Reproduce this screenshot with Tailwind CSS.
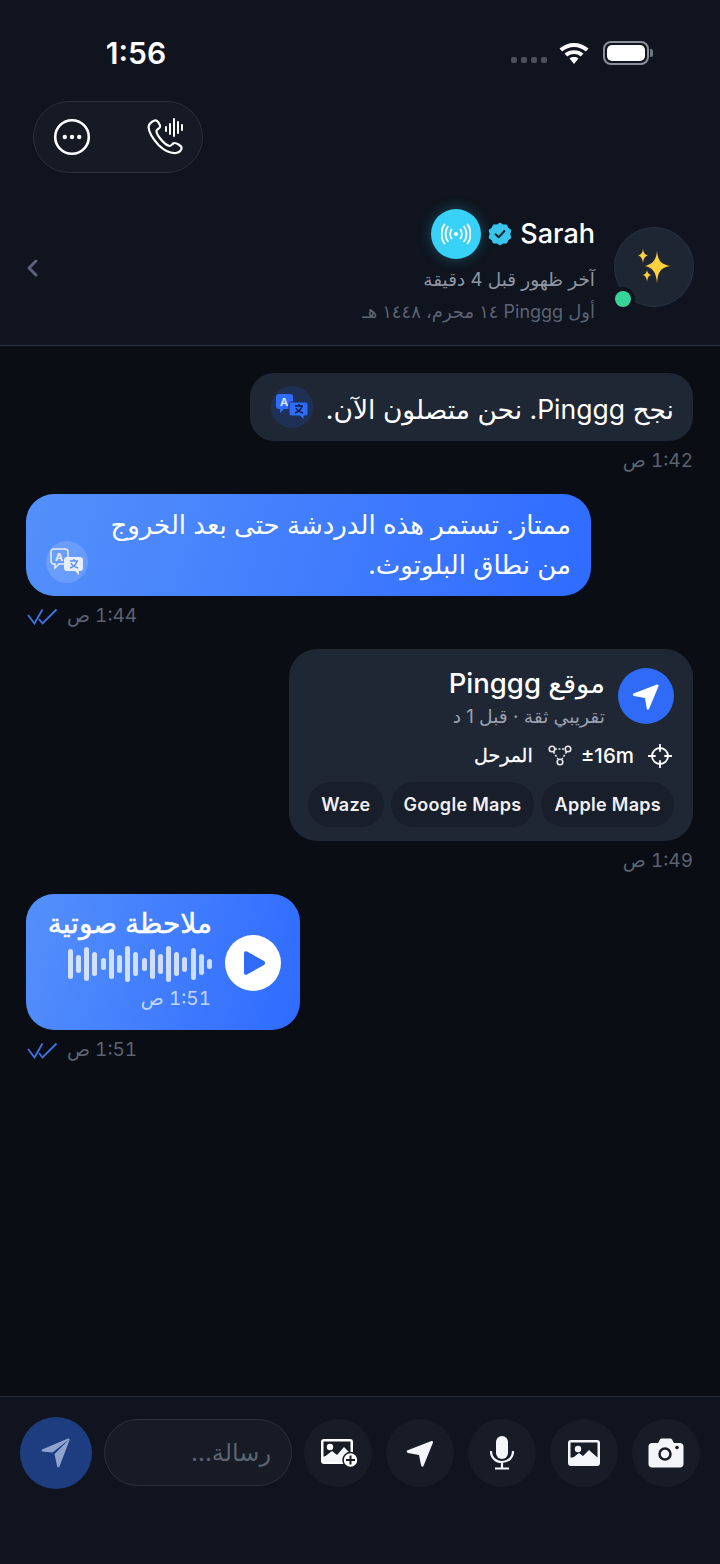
<!DOCTYPE html>
<html lang="ar">
<head>
<meta charset="utf-8">
<script src="https://cdn.jsdelivr.net/npm/@tailwindcss/browser@4"></script>
</head>
<body class="m-0 bg-[#0a0d14]">
<div class="w-[720px] h-[1564px] flex flex-col overflow-hidden bg-[#0a0d14] text-white font-['Inter','DejaVu_Sans',sans-serif]">

  <!-- header -->
  <header class="h-[346px] shrink-0 bg-[#0f141e] border-b border-[#2a3340] flex flex-col">
    <div class="h-[101px] shrink-0 flex items-start pt-[33px]">
      <div class="w-[272px] text-center text-[30px] leading-[40px] font-semibold">1:56</div>
      <div class="flex-1"></div>
      <div class="flex items-center gap-[6px] h-[40px] pr-[67px]">
        <div class="flex gap-[4px] mt-[14px] mr-[3px]">
          <span class="w-[6px] h-[6px] rounded-[2px] bg-[#4c505a]"></span><span class="w-[6px] h-[6px] rounded-[2px] bg-[#4c505a]"></span><span class="w-[6px] h-[6px] rounded-[2px] bg-[#4c505a]"></span><span class="w-[6px] h-[6px] rounded-[2px] bg-[#4c505a]"></span>
        </div>
        <svg class="w-[32px] h-[24px] ml-[2px] mr-[7px]" viewBox="0 0 32 24" fill="none">
          <path d="M1.500 7.500C9.500 0 22.500 0 30.500 7.500L27.800 10.500C21 4.500 11 4.500 4.200 10.500Z" fill="#fff"/>
          <path d="M6.500 12.500C11.500 8 20.500 8 25.500 12.500L22.800 15.500C18.800 12.200 13.200 12.200 9.200 15.500Z" fill="#fff"/>
          <path d="M11.500 17.500C14 15.600 18 15.600 20.500 17.500L16 23Z" fill="#fff"/>
        </svg>
        <div class="flex items-center">
          <div class="w-[46px] h-[24px] rounded-[8px] border-[2px] border-[#8b8f97] p-[2px]"><div class="w-full h-full rounded-[5px] bg-white"></div></div>
          <div class="w-[3px] h-[8px] ml-[1px] rounded-r-[2px] bg-[#6f737b]"></div>
        </div>
      </div>
    </div>
    <div class="pl-[33px] shrink-0">
      <div class="w-[170px] h-[72px] rounded-full bg-[#161a24] border border-[#2a303c] flex items-center justify-between pl-[19px] pr-[15px]">
        <svg class="w-[38px] h-[38px]" viewBox="0 0 38 38" fill="none"><circle cx="19" cy="19" r="16.800" stroke="#fff" stroke-width="2.600"/><circle cx="11.800" cy="19" r="2.200" fill="#fff"/><circle cx="19" cy="19" r="2.200" fill="#fff"/><circle cx="26.200" cy="19" r="2.200" fill="#fff"/></svg>
        <svg class="w-[42px] h-[38px]" viewBox="0 0 40 38" fill="none" stroke="#fff">
          <path d="M8.500 2.500C5 4 2.400 6.500 2.600 9.500C3 15 8 22 12.500 27C17 31.500 24 35.500 30 35C33 34.600 35.400 32.500 35.600 30.200C35.700 28.800 34.400 27.600 32.600 26.500C30.400 25.200 28.800 24.600 27.600 25.200C26 26 25.200 28.200 23.600 28C20.600 27.400 16.500 23.500 13.800 20C11.800 17.400 10 14 10.600 12.400C11.200 11 13.400 10.800 14 9C14.300 7.600 13.400 5.800 12.200 4.200C11 2.600 9.800 2 8.500 2.500Z" stroke-width="2.200" stroke-linejoin="round"/>
          <path d="M20 9V13M24 6V16M28 1V18M32 4V15M36 7V12" stroke-width="2" stroke-linecap="round"/>
        </svg>
      </div>
    </div>
    <div class="flex items-start mt-[54px] h-[92px]">
      <div class="w-[33px] shrink-0"></div>
      <svg class="w-[14px] h-[20px] mt-[31px] -ml-[8px]" viewBox="0 0 14 20" fill="none"><path d="M11 3L4 10L11 17" stroke="#59627a" stroke-width="3" stroke-linecap="round" stroke-linejoin="round"/></svg>
      <div class="flex-1 flex flex-col items-end pr-[19px] -mt-[18px]">
        <div class="flex items-center h-[50px]">
          <div class="w-[50px] h-[50px] rounded-full bg-[#38d1f8] shadow-[0_0_14px_rgba(56,209,248,0.3)] flex items-center justify-center">
            <svg class="w-[30px] h-[22px]" viewBox="0 0 30 22" fill="none" stroke="#fff" stroke-linecap="round" stroke-width="1.900"><circle cx="15" cy="11" r="2" fill="#fff" stroke="none"/><path d="M10.500 6.500C8.800 9 8.800 13 10.500 15.500M19.500 6.500C21.200 9 21.200 13 19.500 15.500M6.800 3.800C3.800 8 3.800 14 6.800 18.200M23.200 3.800C26.200 8 26.200 14 23.200 18.200M3.400 1.500C-.5 7 -.5 15 3.400 20.500M26.600 1.500C30.500 7 30.500 15 26.600 20.500"/></svg>
          </div>
          <svg class="w-[24px] h-[24px] ml-[7px]" viewBox="0 0 24 24"><path d="M12 1L15 3L18.600 2.900L19.900 6.100L22.900 8.100L21.800 12L22.900 15.900L19.900 17.900L18.600 21.100L15 21L12 23L9 21L5.400 21.100L4.100 17.900L1.100 15.900L2.200 12L1.100 8.100L4.100 6.100L5.400 2.900L9 3Z" fill="#38c6ef" stroke="#38c6ef" stroke-linejoin="round"/><path d="M7.600 12.200L10.700 15.300L16.400 9" fill="none" stroke="#10202c" stroke-width="2" stroke-linecap="round" stroke-linejoin="round"/></svg>
          <div class="ml-[8px] text-[27px] leading-[34px] font-medium">Sarah</div>
        </div>
        <div dir="rtl" class="mt-[7px] text-[18.500px] leading-[26px] text-[#8e95a3] whitespace-nowrap">آخر ظهور قبل 4 دقيقة</div>
        <div dir="rtl" class="mt-[7px] text-[18px] leading-[26px] text-[#5c6372] whitespace-nowrap">أول Pinggg ١٤ محرم، ١٤٤٨ هـ</div>
      </div>
      <div class="relative w-[80px] h-[80px] mr-[26px] shrink-0 rounded-full bg-[#1f2633] border border-[#2a3140] flex items-center justify-center">
        <svg class="w-[34px] h-[36px]" viewBox="0 0 34 36"><path d="M20 2C21 11 23 15 33 17C23 19 21 23 20 34C19 23 16 19 8 17C16 15 19 11 20 2Z" fill="#fdd13d"/><path d="M6 0C6.500 4 8 6 11 6.500C8 7 6.500 9.500 6 14C5.500 9.500 4 7 1 6.500C4 6 5.500 4 6 0Z" fill="#fdd13d"/><path d="M10 21C10.500 24 12 25.500 14.500 26C12 26.500 10.500 28 10 33C9.500 28 8 26.500 5.500 26C8 25.500 9.500 24 10 21Z" fill="#fdd13d"/></svg>
        <span class="absolute left-[-4px] bottom-[-5px] w-[24px] h-[24px] rounded-full bg-[#38d399] border-[4px] border-[#0f141e]"></span>
      </div>
    </div>
  </header>

  <!-- messages -->
  <main class="flex-1 flex flex-col px-[27px] pt-[27px]">
    <div class="self-end w-[443px] h-[68px] rounded-[24px] bg-[#1f2735] flex items-center justify-between pl-[21px] pr-[19px]">
      <div class="w-[42px] h-[42px] rounded-full bg-[#1e3054] flex items-center justify-center">
        <svg class="w-[34px] h-[28px]" viewBox="0 0 34 28"><path d="M4 1H15C17 1 18 2 18 4V13C18 15 17 16 15 16H9L5 20V16H4C2 16 1 15 1 13V4C1 2 2 1 4 1Z" fill="#2f6bff"/><text x="5" y="13" font-size="11" font-weight="700" fill="#dbe6ff" font-family="Inter">A</text><path d="M17 9H30C32 9 33 10 33 12V20C33 22 32 23 30 23H29V27L25 23H17C15 23 14 22 14 20V12C14 10 15 9 17 9Z" fill="#2f6bff" stroke="#1e3054"/><path d="M20 13H28M24 11V13M27 13C26 17 23 19 20 20M21 15C22 17 25 19 28 20" stroke="#0f1b38" stroke-width="1.400" fill="none"/></svg>
      </div>
      <div dir="rtl" class="text-[26.500px] leading-[34px] text-white whitespace-nowrap mt-[3px]">نجح Pinggg. نحن متصلون الآن.</div>
    </div>
    <div dir="rtl" class="self-end mt-[8px] text-[19px] leading-[24px] text-[#5b6270] whitespace-nowrap tabular-nums"><span dir="ltr">1:42</span> ص</div>

    <div class="self-start mt-[21px] -ml-[1px] w-[565px] h-[102px] rounded-[28px] bg-linear-[105deg] from-[#5490fa] to-[#2f6bff] relative pt-[11px] pr-[20px]">
      <div dir="rtl" class="text-[26px] leading-[40px] text-white whitespace-nowrap">ممتاز. تستمر هذه الدردشة حتى بعد الخروج<br>من نطاق البلوتوث.</div>
      <div class="absolute left-[20px] bottom-[13px] w-[42px] h-[42px] rounded-full bg-white/15 flex items-center justify-center">
        <svg class="w-[34px] h-[28px]" viewBox="0 0 34 28"><path d="M4 1H15C17 1 18 2 18 4V13C18 15 17 16 15 16H9L5 20V16H4C2 16 1 15 1 13V4C1 2 2 1 4 1Z" fill="none" stroke="#e6eeff" stroke-width="1.500"/><text x="5" y="13" font-size="11" font-weight="700" fill="#e6eeff" font-family="Inter">A</text><path d="M17 9H30C32 9 33 10 33 12V20C33 22 32 23 30 23H29V27L25 23H17C15 23 14 22 14 20V12C14 10 15 9 17 9Z" fill="#e6eeff"/><path d="M20 13H28M24 11V13M27 13C26 17 23 19 20 20M21 15C22 17 25 19 28 20" stroke="#5a90f2" stroke-width="1.400" fill="none"/></svg>
      </div>
    </div>
    <div class="self-start mt-[8px] flex items-center gap-[9px] h-[24px]">
      <svg class="w-[31px] h-[17px]" viewBox="0 0 31 17" fill="none" stroke="#3f74e8" stroke-width="1.800"><path d="M1 7L7.500 15.500L15.500 1.500"/><path d="M12 11L15.500 15.500L29.500 1.500"/></svg>
      <div dir="rtl" class="text-[19px] leading-[24px] text-[#5b6270] whitespace-nowrap tabular-nums"><span dir="ltr">1:44</span> ص</div>
    </div>

    <div class="self-end mt-[21px] w-[404px] h-[192px] rounded-[28px] bg-[#1f2735] flex flex-col px-[19px] pt-[19px]">
      <div class="flex items-start justify-end gap-[13px]">
        <div class="flex flex-col items-end">
          <div dir="rtl" class="text-[27.500px] leading-[30px] font-medium whitespace-nowrap">موقع Pinggg</div>
          <div dir="rtl" class="mt-[6px] text-[18.700px] leading-[26px] text-[#9aa1ad] whitespace-nowrap">تقريبي ثقة · قبل 1 د</div>
        </div>
        <div class="w-[56px] h-[56px] rounded-full bg-[#2f6bf6] flex items-center justify-center">
          <svg class="w-[30px] h-[30px]" viewBox="0 0 30 30"><path d="M2.500 12.500L26 3.500C27 3.100 28 4 27.600 5L18 28C17.400 29 16 28.800 15.800 27.800L14 17L3 15C1.800 14.700 1.600 13 2.500 12.500Z" fill="#fff"/></svg>
        </div>
      </div>
      <div class="flex items-center justify-end mt-[12px] h-[28px] pr-[2px]">
        <div dir="rtl" class="text-[19px] leading-[26px] font-medium whitespace-nowrap [-webkit-text-stroke:0.3px_white]">المرحل</div>
        <svg class="w-[24px] h-[22px] ml-[15px]" viewBox="0 0 24 22" fill="none" stroke="#e5e7eb" stroke-width="1.600"><circle cx="4" cy="4" r="2.800"/><circle cx="20" cy="4" r="2.800"/><circle cx="12" cy="17" r="2.800"/><path d="M7 4H17M5.500 7L10 14M18.500 7L14 14" stroke-dasharray="2 1.500"/></svg>
        <div class="ml-[9px] text-[20.500px] leading-[26px] font-medium">±16m</div>
        <svg class="w-[24px] h-[24px] ml-[14px]" viewBox="0 0 24 24" fill="none" stroke="#fff" stroke-width="1.800" stroke-linecap="round"><circle cx="12" cy="12" r="8"/><path d="M12 0.500V7M12 17V23.500M0.500 12H7M17 12H23.500"/></svg>
      </div>
      <div class="flex justify-end gap-[7px] mt-[12px]">
        <div class="h-[45px] px-[13px] rounded-full bg-[#181e2a] flex items-center text-[18px] font-semibold tracking-[0.3px] text-[#eef0f3]">Waze</div>
        <div class="h-[45px] px-[13px] rounded-full bg-[#181e2a] flex items-center text-[18px] font-semibold tracking-[0.3px] text-[#eef0f3]">Google Maps</div>
        <div class="h-[45px] px-[13px] rounded-full bg-[#181e2a] flex items-center text-[18px] font-semibold tracking-[0.3px] text-[#eef0f3]">Apple Maps</div>
      </div>
    </div>
    <div dir="rtl" class="self-end mt-[8px] text-[19px] leading-[24px] text-[#5b6270] whitespace-nowrap tabular-nums"><span dir="ltr">1:49</span> ص</div>

    <div class="self-start mt-[21px] -ml-[1px] w-[274px] h-[136px] rounded-[28px] bg-linear-[105deg] from-[#5490fa] to-[#2f6bff] flex flex-col items-end relative">
      <div class="absolute right-[19px] top-[41px] w-[56px] h-[56px] rounded-full bg-white flex items-center justify-center">
        <svg class="w-[24px] h-[26px] ml-[2px]" viewBox="0 0 24 26"><path d="M2 3.500C2 1.500 3.500 .8 5 1.600L22 11C23.500 12 23.500 14 22 15L5 24.500C3.500 25.300 2 24.500 2 22.500Z" fill="#2f6bf6"/></svg>
      </div>
      <div dir="rtl" class="mt-[12px] mr-[88px] text-[28px] leading-[34px] whitespace-nowrap [-webkit-text-stroke:0.5px_white]">ملاحظة صوتية</div>
      <div class="mr-[88px] mt-[6px] h-[36px] flex items-center gap-[3.200px]">
        <span class="w-[5px] h-[30px] rounded-full bg-white/75"></span><span class="w-[5px] h-[18px] rounded-full bg-white/75"></span><span class="w-[5px] h-[34px] rounded-full bg-white/75"></span><span class="w-[5px] h-[24px] rounded-full bg-white/75"></span><span class="w-[5px] h-[12px] rounded-full bg-white/75"></span><span class="w-[5px] h-[30px] rounded-full bg-white/75"></span><span class="w-[5px] h-[18px] rounded-full bg-white/75"></span><span class="w-[5px] h-[36px] rounded-full bg-white/75"></span><span class="w-[5px] h-[24px] rounded-full bg-white/75"></span><span class="w-[5px] h-[13px] rounded-full bg-white/75"></span><span class="w-[5px] h-[30px] rounded-full bg-white/75"></span><span class="w-[5px] h-[20px] rounded-full bg-white/75"></span><span class="w-[5px] h-[36px] rounded-full bg-white/75"></span><span class="w-[5px] h-[24px] rounded-full bg-white/75"></span><span class="w-[5px] h-[15px] rounded-full bg-white/75"></span><span class="w-[5px] h-[32px] rounded-full bg-white/75"></span><span class="w-[5px] h-[21px] rounded-full bg-white/75"></span><span class="w-[5px] h-[10px] rounded-full bg-white/75"></span>
      </div>
      <div dir="rtl" class="mr-[89px] mt-[5px] text-[19px] leading-[24px] text-white/70 whitespace-nowrap tabular-nums"><span dir="ltr">1:51</span> ص</div>
    </div>
    <div class="self-start mt-[8px] flex items-center gap-[9px] h-[24px]">
      <svg class="w-[31px] h-[17px]" viewBox="0 0 31 17" fill="none" stroke="#3f74e8" stroke-width="1.800"><path d="M1 7L7.500 15.500L15.500 1.500"/><path d="M12 11L15.500 15.500L29.500 1.500"/></svg>
      <div dir="rtl" class="text-[19px] leading-[24px] text-[#5b6270] whitespace-nowrap tabular-nums"><span dir="ltr">1:51</span> ص</div>
    </div>
  </main>

  <!-- composer -->
  <footer class="h-[168px] shrink-0 bg-[#10141e] border-t border-[#252a36] flex items-start pt-[20px] pl-[20px]">
    <div class="w-[72px] h-[72px] rounded-full bg-[#1e3d80] flex items-center justify-center shrink-0">
      <svg class="w-[32px] h-[32px]" viewBox="0 0 32 32"><path d="M2 12.500L28 1.500C29 1.100 30 2 29.600 3L19.500 29.500C19 30.500 17.500 30.500 17.200 29.400L14.500 17L29 2.500L12.500 15.500L2.500 14.500C1.500 14.200 1.300 13 2 12.500Z" fill="#8fa3cd"/></svg>
    </div>
    <div class="ml-[12px] mt-[2px] w-[188px] h-[67px] rounded-full bg-[#161b26] border border-[#2b313d] flex items-center justify-end pr-[20px] shrink-0">
      <div dir="rtl" class="text-[24px] leading-[34px] text-[#5b6270] whitespace-nowrap">رسالة...</div>
    </div>
    <div class="ml-[12px] mt-[2px] w-[68px] h-[68px] rounded-full bg-[#171c27] flex items-center justify-center shrink-0">
      <svg class="w-[42px] h-[32px] ml-[4px]" viewBox="0 0 42 32"><rect x="2" y="2" width="32" height="25" rx="3" fill="#fff"/><rect x="4.500" y="4.500" width="27" height="15" fill="#171c27"/><circle cx="11" cy="10" r="3.200" fill="#fff"/><path d="M4 21L13 14L18 18L25 10L32 17V25H4Z" fill="#f3f5fa"/><circle cx="31.500" cy="23" r="7.500" fill="#fff" stroke="#171c27" stroke-width="1.500"/><path d="M31.500 18.500V27.500M27 23H36" stroke="#171c27" stroke-width="2"/></svg>
    </div>
    <div class="ml-[14px] mt-[2px] w-[68px] h-[68px] rounded-full bg-[#171c27] flex items-center justify-center shrink-0">
      <svg class="w-[30px] h-[30px]" viewBox="0 0 30 30"><path d="M2 12.500L26.500 3C27.500 2.600 28.400 3.500 28 4.500L18.500 28C18 29 16.600 29 16.200 27.800L14 17L3 15C1.800 14.800 1.300 13 2 12.500Z" fill="#f3f5fa"/></svg>
    </div>
    <div class="ml-[14px] mt-[2px] w-[68px] h-[68px] rounded-full bg-[#171c27] flex items-center justify-center shrink-0">
      <svg class="w-[26px] h-[34px]" viewBox="0 0 26 34"><rect x="7" y="0" width="12" height="23" rx="6" fill="#f3f5fa"/><path d="M2 15C2 22 7 26 13 26C19 26 24 22 24 15M13 26V32M6 32.500H20" fill="none" stroke="#f3f5fa" stroke-width="2.200"/></svg>
    </div>
    <div class="ml-[14px] mt-[2px] w-[68px] h-[68px] rounded-full bg-[#171c27] flex items-center justify-center shrink-0">
      <svg class="w-[34px] h-[28px]" viewBox="0 0 34 28"><rect x="1" y="1" width="32" height="26" rx="3" fill="#f3f5fa"/><rect x="3.500" y="3.500" width="27" height="15" fill="#171c27"/><circle cx="11" cy="10" r="3.200" fill="#f3f5fa"/><path d="M3 21L12 14L16 17L22 11L31 19V25H3Z" fill="#f3f5fa"/></svg>
    </div>
    <div class="ml-[14px] mt-[2px] w-[68px] h-[68px] rounded-full bg-[#171c27] flex items-center justify-center shrink-0">
      <svg class="w-[36px] h-[30px]" viewBox="0 0 36 30"><path d="M4 5H10L12 1.500C12.500 .8 13 .5 14 .5H22C23 .5 23.500 .8 24 1.500L26 5H32C34 5 35.500 6.500 35.500 8.500V26C35.500 28 34 29.500 32 29.500H4C2 29.500 .5 28 .5 26V8.500C.5 6.500 2 5 4 5Z" fill="#f3f5fa"/><circle cx="17" cy="16" r="5.500" fill="none" stroke="#171c27" stroke-width="2.500"/><circle cx="29" cy="9.500" r="1.800" fill="#171c27"/></svg>
    </div>
  </footer>
</div>
</body>
</html>
